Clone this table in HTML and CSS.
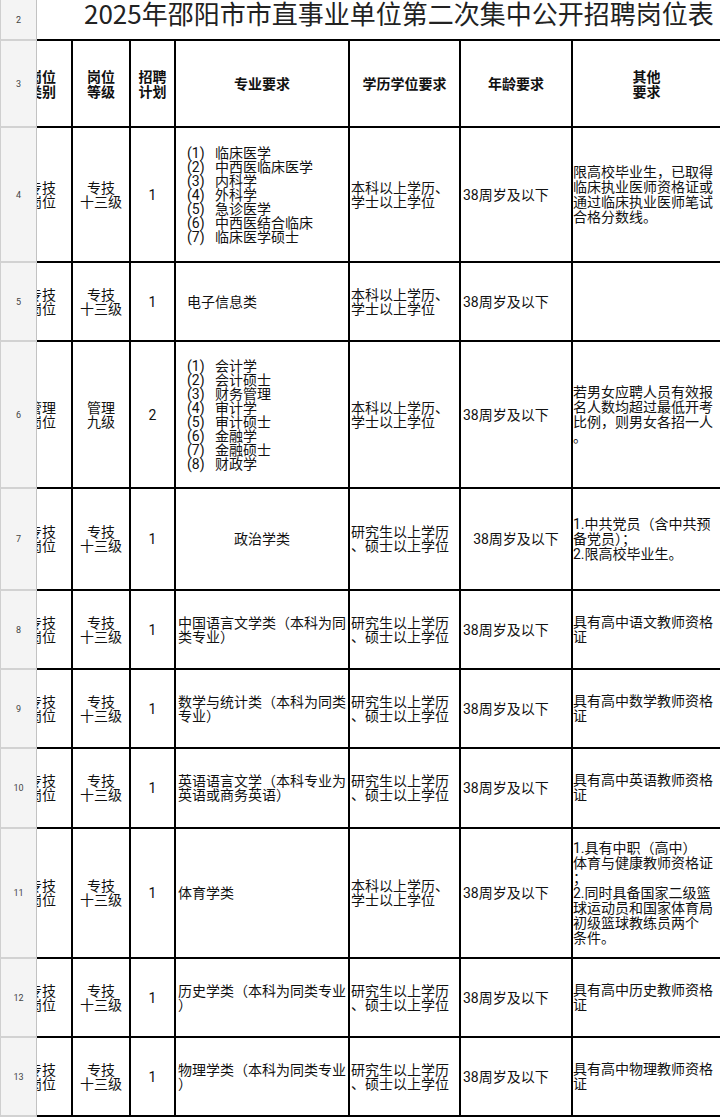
FILE: index.html
```html
<!DOCTYPE html>
<html lang="zh-CN">
<head>
<meta charset="utf-8">
<title>2025年邵阳市市直事业单位第二次集中公开招聘岗位表</title>
<link rel="stylesheet" href="styles.css">
</head>
<body>
<div class="viewport">
<div class="sheet">
  <!-- row 2 -->
  <div class="rh">2</div>
  <div class="title">2025年邵阳市市直事业单位第二次集中公开招聘岗位表</div>

  <!-- row 3 header -->
  <div class="rh">3</div>
  <div class="c c1 hd"><div class="clip">岗位<br>类别</div></div>
  <div class="c ctr hd">岗位<br>等级</div>
  <div class="c ctr hd">招聘<br>计划</div>
  <div class="c ctr hd">专业要求</div>
  <div class="c ctr hd">学历学位要求</div>
  <div class="c ctr hd">年龄要求</div>
  <div class="c ctr hd last">其他<br>要求</div>

  <!-- row 4 -->
  <div class="rh">4</div>
  <div class="c c1"><div class="clip">专技<br>岗位</div></div>
  <div class="c ctr">专技<br>十三级</div>
  <div class="c ctr">1</div>
  <div class="c list"><div>
    <span class="n">(1)</span>临床医学<br>
    <span class="n">(2)</span>中西医临床医学<br>
    <span class="n">(3)</span>内科学<br>
    <span class="n">(4)</span>外科学<br>
    <span class="n">(5)</span>急诊医学<br>
    <span class="n">(6)</span>中西医结合临床<br>
    <span class="n">(7)</span>临床医学硕士
  </div></div>
  <div class="c edu">本科以上学历、<br>学士以上学位</div>
  <div class="c age">38周岁及以下</div>
  <div class="c other last">限高校毕业生，已取得<br>临床执业医师资格证或<br>通过临床执业医师笔试<br>合格分数线。</div>

  <!-- row 5 -->
  <div class="rh">5</div>
  <div class="c c1"><div class="clip">专技<br>岗位</div></div>
  <div class="c ctr">专技<br>十三级</div>
  <div class="c ctr">1</div>
  <div class="c list">电子信息类</div>
  <div class="c edu">本科以上学历、<br>学士以上学位</div>
  <div class="c age">38周岁及以下</div>
  <div class="c other last"></div>

  <!-- row 6 -->
  <div class="rh">6</div>
  <div class="c c1"><div class="clip">管理<br>岗位</div></div>
  <div class="c ctr">管理<br>九级</div>
  <div class="c ctr">2</div>
  <div class="c list"><div>
    <span class="n">(1)</span>会计学<br>
    <span class="n">(2)</span>会计硕士<br>
    <span class="n">(3)</span>财务管理<br>
    <span class="n">(4)</span>审计学<br>
    <span class="n">(5)</span>审计硕士<br>
    <span class="n">(6)</span>金融学<br>
    <span class="n">(7)</span>金融硕士<br>
    <span class="n">(8)</span>财政学
  </div></div>
  <div class="c edu">本科以上学历、<br>学士以上学位</div>
  <div class="c age">38周岁及以下</div>
  <div class="c other last">若男女应聘人员有效报<br>名人数均超过最低开考<br>比例，则男女各招一人<br>。</div>

  <!-- row 7 -->
  <div class="rh">7</div>
  <div class="c c1"><div class="clip">专技<br>岗位</div></div>
  <div class="c ctr">专技<br>十三级</div>
  <div class="c ctr">1</div>
  <div class="c ctr">政治学类</div>
  <div class="c edu">研究生以上学历<br>、硕士以上学位</div>
  <div class="c ctr">38周岁及以下</div>
  <div class="c other last">1.中共党员（含中共预<br>备党员）；<br>2.限高校毕业生。</div>

  <!-- row 8 -->
  <div class="rh">8</div>
  <div class="c c1"><div class="clip">专技<br>岗位</div></div>
  <div class="c ctr">专技<br>十三级</div>
  <div class="c ctr">1</div>
  <div class="c major">中国语言文学类（本科为同<br>类专业）</div>
  <div class="c edu">研究生以上学历<br>、硕士以上学位</div>
  <div class="c age">38周岁及以下</div>
  <div class="c other last">具有高中语文教师资格<br>证</div>

  <!-- row 9 -->
  <div class="rh">9</div>
  <div class="c c1"><div class="clip">专技<br>岗位</div></div>
  <div class="c ctr">专技<br>十三级</div>
  <div class="c ctr">1</div>
  <div class="c major">数学与统计类（本科为同类<br>专业）</div>
  <div class="c edu">研究生以上学历<br>、硕士以上学位</div>
  <div class="c age">38周岁及以下</div>
  <div class="c other last">具有高中数学教师资格<br>证</div>

  <!-- row 10 -->
  <div class="rh">10</div>
  <div class="c c1"><div class="clip">专技<br>岗位</div></div>
  <div class="c ctr">专技<br>十三级</div>
  <div class="c ctr">1</div>
  <div class="c major">英语语言文学（本科专业为<br>英语或商务英语）</div>
  <div class="c edu">研究生以上学历<br>、硕士以上学位</div>
  <div class="c age">38周岁及以下</div>
  <div class="c other last">具有高中英语教师资格<br>证</div>

  <!-- row 11 -->
  <div class="rh">11</div>
  <div class="c c1"><div class="clip">专技<br>岗位</div></div>
  <div class="c ctr">专技<br>十三级</div>
  <div class="c ctr">1</div>
  <div class="c major">体育学类</div>
  <div class="c edu">本科以上学历、<br>学士以上学位</div>
  <div class="c age">38周岁及以下</div>
  <div class="c other last">1.具有中职（高中）<br>体育与健康教师资格证<br>；<br>2.同时具备国家二级篮<br>球运动员和国家体育局<br>初级篮球教练员两个<br>条件。</div>

  <!-- row 12 -->
  <div class="rh">12</div>
  <div class="c c1"><div class="clip">专技<br>岗位</div></div>
  <div class="c ctr">专技<br>十三级</div>
  <div class="c ctr">1</div>
  <div class="c major">历史学类（本科为同类专业<br>）</div>
  <div class="c edu">研究生以上学历<br>、硕士以上学位</div>
  <div class="c age">38周岁及以下</div>
  <div class="c other last">具有高中历史教师资格<br>证</div>

  <!-- row 13 -->
  <div class="rh">13</div>
  <div class="c c1"><div class="clip">专技<br>岗位</div></div>
  <div class="c ctr">专技<br>十三级</div>
  <div class="c ctr">1</div>
  <div class="c major">物理学类（本科为同类专业<br>）</div>
  <div class="c edu">研究生以上学历<br>、硕士以上学位</div>
  <div class="c age">38周岁及以下</div>
  <div class="c other last">具有高中物理教师资格<br>证</div>
</div>
</div>
</body>
</html>
```

FILE: styles.css
```css
html, body {
  margin: 0;
  padding: 0;
  background: #ffffff;
  overflow: hidden;
}

.viewport {
  width: 720px;
  height: 1117px;
  overflow: hidden;
}

.sheet {
  display: grid;
  width: 722px;
  grid-template-columns: 37px 36px 58px 45px 174px 111px 112px 149px;
  grid-template-rows: 41px 87px 135px 79px 147px 102px 79px 79px 80px 130px 79px 79px;
  font-family: Roboto, "Noto Sans CJK SC", sans-serif;
  font-size: 14px;
  line-height: 14px;
  color: #111;
}

/* row header (frozen) */
.rh {
  display: flex;
  align-items: center;
  justify-content: center;
  background: #f4f4f4;
  border-left: 1px solid #cfcfcf;
  border-right: 1px solid #c2c2c2;
  border-bottom: 2px solid #d2d2d2;
  font-family: Roboto, sans-serif;
  font-size: 9px;
  color: #444;
}

.title {
  grid-column: 2 / 9;
  border-bottom: 2px solid #000;
  padding-left: 47px;
  font-family: "Noto Sans CJK SC", sans-serif;
  font-size: 26px;
  line-height: 26px;
  color: #222;
  white-space: nowrap;
}

.c {
  display: flex;
  align-items: center;
  border-right: 2px solid #000;
  border-bottom: 2px solid #000;
  white-space: nowrap;
  overflow: hidden;
}

.hd {
  font-family: "Noto Sans CJK SC", sans-serif;
  font-weight: 700;
  line-height: 15px;
}

.ctr {
  justify-content: center;
  text-align: center;
}

.c1 {
  justify-content: flex-start;
}

.clip {
  flex-shrink: 0;
  width: 60px;
  margin-left: -25px;
  text-align: center;
}

.list {
  padding-left: 11px;
}

.n {
  display: inline-block;
  width: 28px;
}

.major {
  padding-left: 2px;
}

.edu {
  padding-left: 1px;
}

.age {
  padding-left: 2px;
}

.other {
  padding-left: 0;
  line-height: 15px;
}
```
